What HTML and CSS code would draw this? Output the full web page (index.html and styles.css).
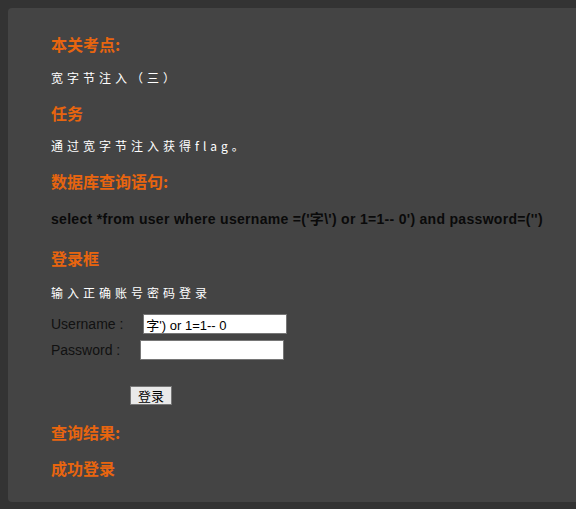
FILE: index.html
```html
<!DOCTYPE html>
<html>
<head>
<meta charset="utf-8">
<link rel="stylesheet" href="styles.css">
</head>
<body>
<div class="panel">
  <h3 class="title t1">本关考点:</h3>
  <p class="txt p1">宽字节注入（三）</p>
  <h3 class="title t2">任务</h3>
  <p class="txt p2">通过宽字节注入获得flag。</p>
  <h3 class="title t3">数据库查询语句:</h3>
  <p class="sql">select *from user where username =('字\') or 1=1-- 0') and password=('')</p>
  <h3 class="title t4">登录框</h3>
  <p class="txt p4">输入正确账号密码登录</p>
  <form class="login">
    <div class="row row-user"><span class="label">Username :</span><input class="field" type="text" value="字') or 1=1-- 0"></div>
    <div class="row row-pass"><span class="label">Password :</span><input class="field" type="password"></div>
    <div class="submit-row"><button class="btn" type="button">登录</button></div>
  </form>
  <h3 class="title t5">查询结果:</h3>
  <h3 class="title t6">成功登录</h3>
</div>
</body>
</html>
```
FILE: styles.css
```css
html, body {
  margin: 0;
  padding: 0;
}
body {
  background: #333333;
  font-family: "Liberation Sans", "Noto Sans CJK SC", sans-serif;
  padding: 8px 0 0 8px;
  height: 509px;
  box-sizing: border-box;
  overflow: hidden;
}
.panel {
  background: #444444;
  border-radius: 4px 0 0 4px;
  padding: 26px 0 24px 43px;
  height: 494px;
  box-sizing: border-box;
}
.title {
  margin: 0;
  font-family: "Noto Sans CJK SC", sans-serif;
  font-size: 16px;
  line-height: 20px;
  font-weight: bold;
  color: #e8650f;
}
.txt {
  margin: 0;
  font-family: "Noto Sans CJK SC", "Liberation Sans", sans-serif;
  font-size: 12px;
  line-height: 16px;
  letter-spacing: 4px;
  color: #ffffff;
}
.p1 { margin-top: 16px; }
.t2 { margin-top: 17px; }
.p2 { margin-top: 15px; }
.t3 { margin-top: 17px; }
.sql {
  margin: 19px 0 0 0;
  font-family: "Liberation Sans", "Noto Sans CJK SC", sans-serif;
  font-weight: bold;
  font-size: 14px;
  line-height: 18px;
  letter-spacing: 0.3px;
  color: #0a0a0a;
  white-space: nowrap;
}
.t4 { margin-top: 20px; }
.p4 { margin-top: 17px; }
.login {
  margin: 13px 0 0 0;
}
.row {
  display: flex;
  align-items: center;
  height: 20px;
}
.row-pass { margin-top: 6px; }
.label {
  font-size: 14px;
  color: #111111;
}
.field {
  margin: 0 0 0 20px;
  width: 144px;
  height: 20px;
  box-sizing: border-box;
  border: 1px solid #767676;
  padding: 0 2px;
  font-family: "Liberation Sans", "Noto Sans CJK SC", sans-serif;
  font-size: 13px;
  color: #000;
  background: #fff;
}
.submit-row {
  margin-top: 26px;
  padding-left: 79px;
}
.btn {
  width: 42px;
  height: 19px;
  padding: 0;
  border: 1px solid #767676;
  background: #e9e9e9;
  font-family: "Noto Sans CJK SC", sans-serif;
  font-size: 13px;
  line-height: 15px;
  color: #000;
  display: block;
}
.t5 { margin-top: 17px; }
.t6 { margin-top: 16px; }
```
